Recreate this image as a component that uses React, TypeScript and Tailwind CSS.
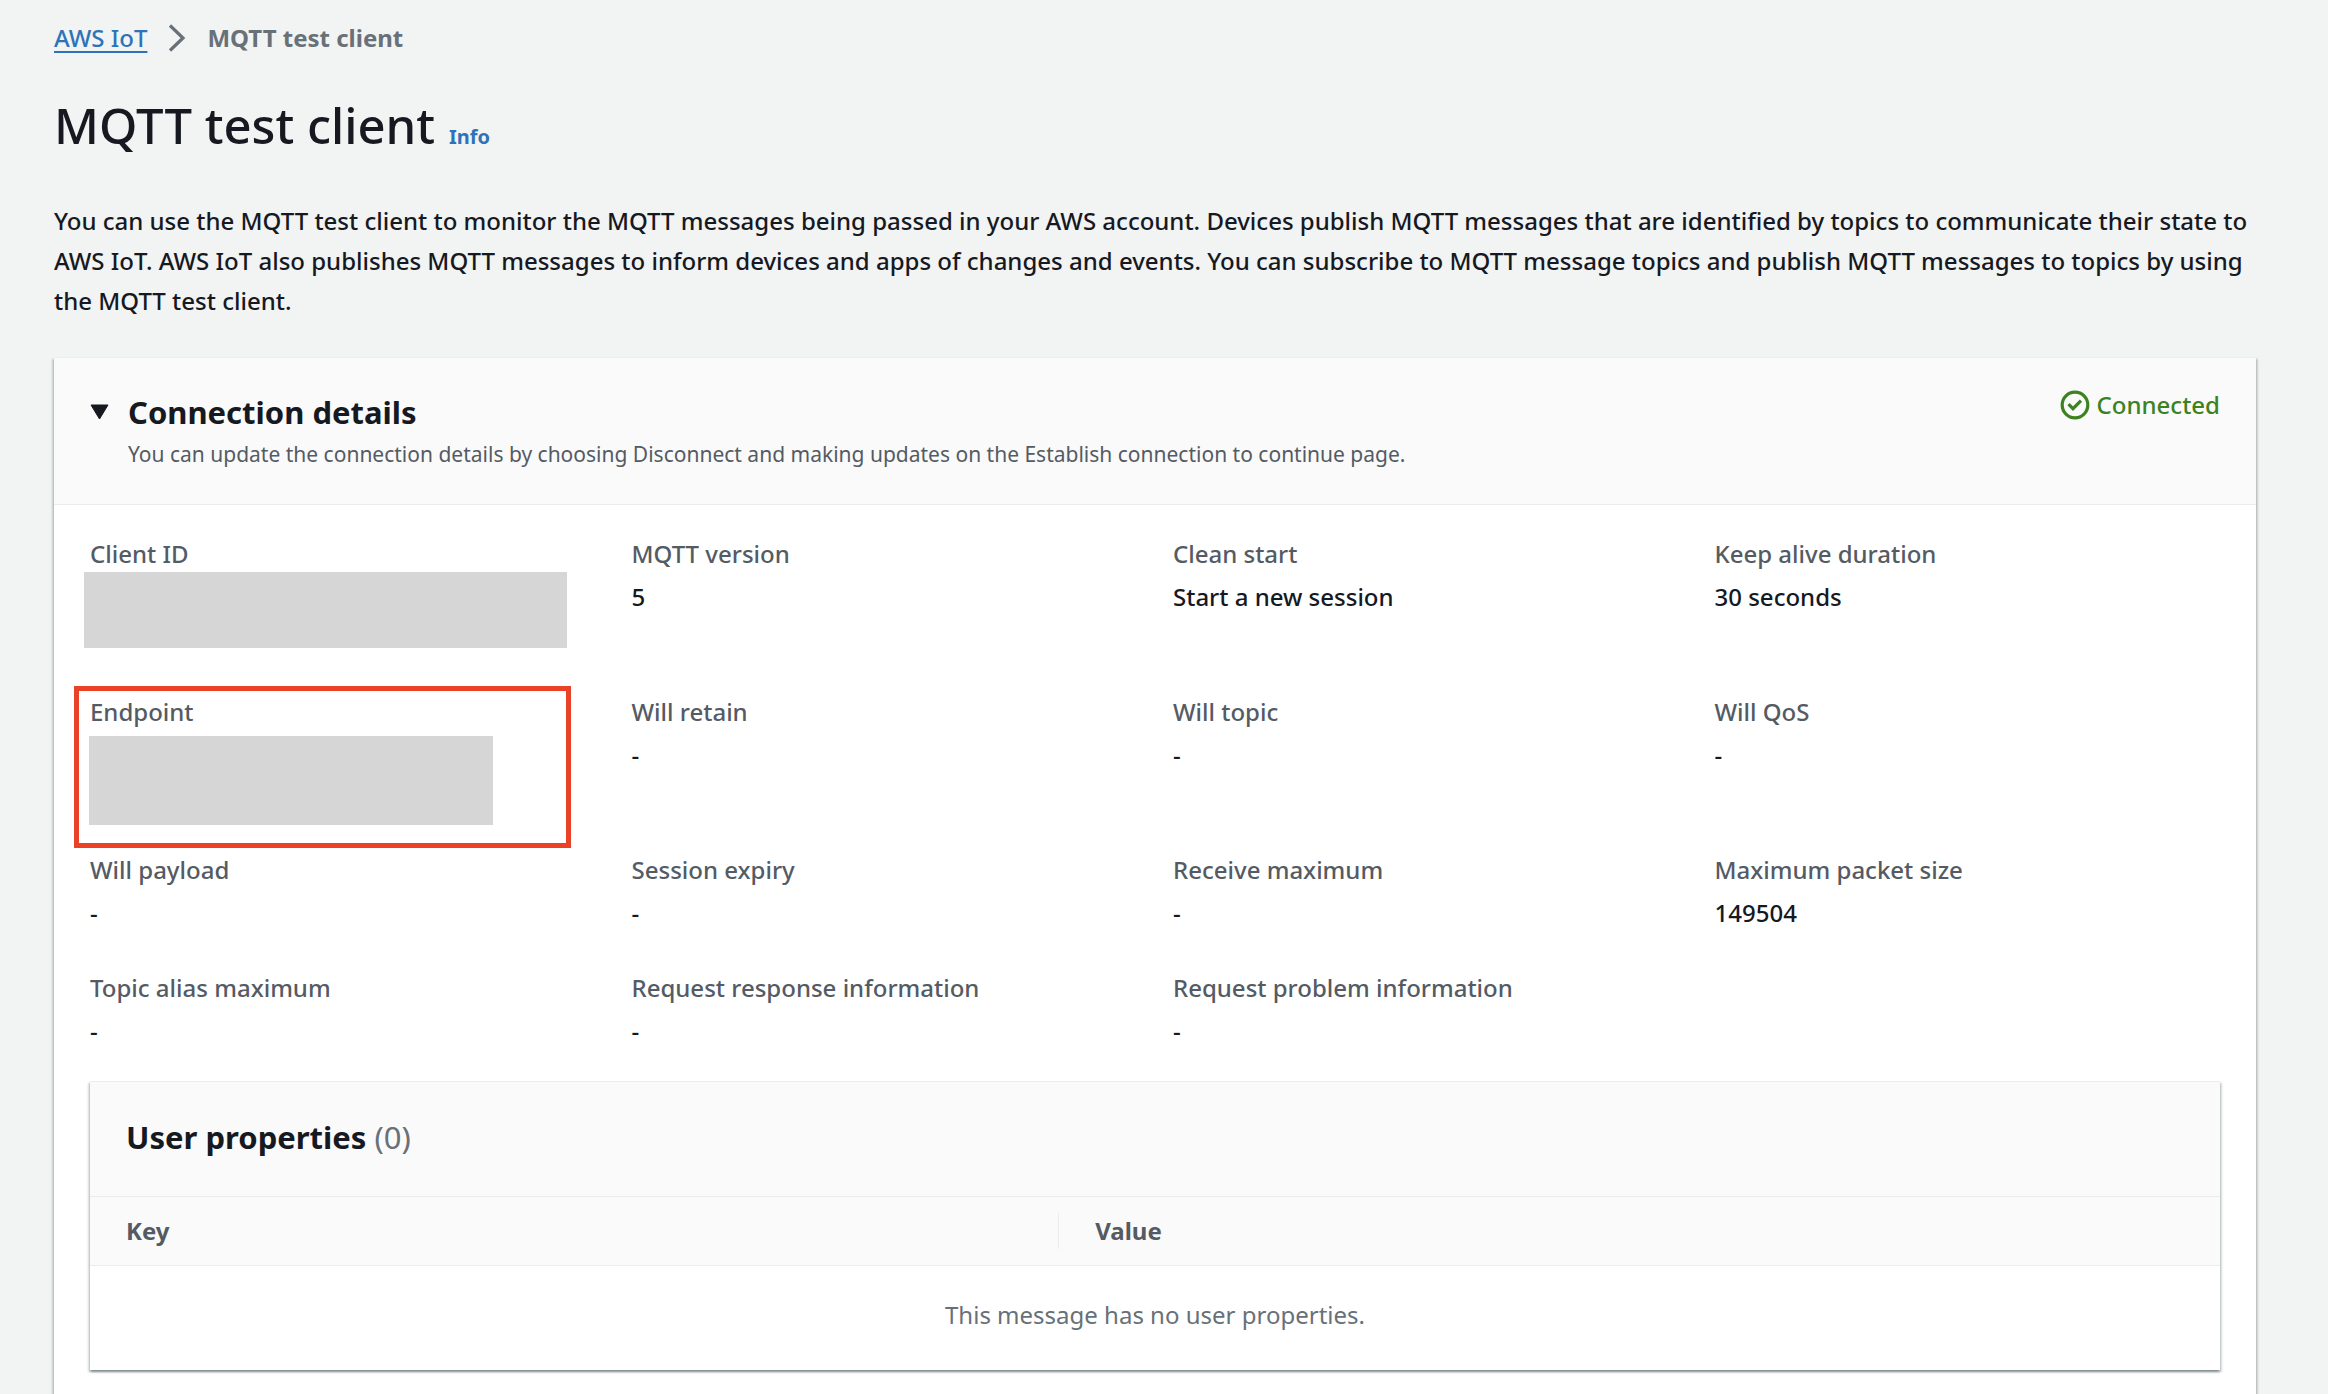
import React from "react";

type Detail = { label: string; value?: string; mask?: "client" | "endpoint" };

const details: Detail[] = [
  { label: "Client ID", mask: "client" },
  { label: "MQTT version", value: "5" },
  { label: "Clean start", value: "Start a new session" },
  { label: "Keep alive duration", value: "30 seconds" },
  { label: "Endpoint", mask: "endpoint" },
  { label: "Will retain", value: "-" },
  { label: "Will topic", value: "-" },
  { label: "Will QoS", value: "-" },
  { label: "Will payload", value: "-" },
  { label: "Session expiry", value: "-" },
  { label: "Receive maximum", value: "-" },
  { label: "Maximum packet size", value: "149504" },
  { label: "Topic alias maximum", value: "-" },
  { label: "Request response information", value: "-" },
  { label: "Request problem information", value: "-" },
];

const surface =
  "border-t border-[#eaeded] bg-white shadow-[0_2px_2px_0_rgba(0,28,36,0.3),2px_2px_2px_0_rgba(0,28,36,0.15),-2px_2px_2px_0_rgba(0,28,36,0.15)]";

function Breadcrumbs() {
  return (
    <nav aria-label="Breadcrumbs" className="flex items-center">
      <a href="#iot" className="text-[#2e73b8] underline decoration-2 underline-offset-4">
        AWS IoT
      </a>
      <svg viewBox="0 0 18 28" className="mx-[21px] h-7 w-[18px]" fill="none" stroke="#687078" strokeWidth="3.2" aria-hidden="true">
        <path d="M2 1.5 L15 14 L2 26.5" />
      </svg>
      <span className="font-bold text-[#687078]">MQTT test client</span>
    </nav>
  );
}

function DetailItem({ label, value, mask }: Detail) {
  return (
    <div className="relative">
      {mask === "endpoint" && (
        <div className="absolute -top-1.5 -left-4 h-[162px] w-[497px] border-[5px] border-[#e94227]" />
      )}
      <dt className="mb-[3px] text-[#545b64]">{label}</dt>
      {mask ? (
        <dd className="h-20">
          <div
            className={
              mask === "client"
                ? "absolute top-[38px] -left-1.5 h-[76px] w-[483px] bg-[#d6d6d6]"
                : "absolute top-11 -left-px h-[89px] w-[404px] bg-[#d6d6d6]"
            }
          />
        </dd>
      ) : (
        <dd>{value}</dd>
      )}
    </div>
  );
}

function UserProperties() {
  return (
    <section className={surface}>
      <h3 className="border-b border-[#eaeded] bg-[#fafafa] px-9 pt-[34px] pb-[38px] text-[31px] leading-[42px] font-bold">
        User properties <span className="font-normal text-[#687078]">(0)</span>
      </h3>
      <table className="w-full table-fixed">
        <thead className="border-b border-[#eaeded] bg-[#fafafa] text-left text-[#545b64]">
          <tr>
            <th className="w-[45.5%] py-4">
              <div className="border-r border-[#eaeded] px-9 leading-9">Key</div>
            </th>
            <th className="px-9 py-4 leading-9">Value</th>
          </tr>
        </thead>
        <tbody>
          <tr>
            <td colSpan={2} className="px-9 pt-[29px] pb-[35px] text-center font-normal text-[#687078]">
              This message has no user properties.
            </td>
          </tr>
        </tbody>
      </table>
    </section>
  );
}

export default function App() {
  return (
    <main className="flex min-h-screen flex-col bg-[#f2f3f3] pr-[72px] pl-[54px] font-['Noto_Sans',sans-serif] text-[24px] leading-10 font-medium text-[#16191f]">
      <div className="pt-[18px]">
        <Breadcrumbs />
      </div>
      <div className="mt-[31px] flex items-baseline gap-3.5">
        <h1 className="text-[49px] leading-[72px]">MQTT test client</h1>
        <a href="#info" className="text-[20px] font-bold text-[#2e73b8]">
          Info
        </a>
      </div>
      <p className="mt-10">
        You can use the MQTT test client to monitor the MQTT messages being passed in your AWS account. Devices publish
        MQTT messages that are identified by topics to communicate their state to AWS IoT. AWS IoT also publishes MQTT
        messages to inform devices and apps of changes and events. You can subscribe to MQTT message topics and publish
        MQTT messages to topics by using the MQTT test client.
      </p>
      <section className={`mt-9 grow ${surface}`}>
        <header className="flex items-start justify-between border-b border-[#eaeded] bg-[#fafafa] px-9 pt-7 pb-[34px]">
          <div className="flex">
            <button type="button" aria-label="Collapse connection details" aria-expanded="true" className="mt-3.5 h-6 w-[38px]">
              <svg viewBox="0 0 20 16" className="h-4 w-5" fill="#16191f" aria-hidden="true">
                <path d="M1 1 H18 L9.5 15 Z" stroke="#16191f" strokeWidth="1" strokeLinejoin="round" />
              </svg>
            </button>
            <div>
              <h2 className="text-[31px] leading-[52px] font-bold">Connection details</h2>
              <p className="text-[21px] leading-8 font-normal text-[#545b64]">
                You can update the connection details by choosing Disconnect and making updates on the Establish
                connection to continue page.
              </p>
            </div>
          </div>
          <div className="flex items-center gap-[7px] leading-[38px] text-[#3d8220]">
            <svg viewBox="0 0 30 30" className="size-[30px]" fill="none" stroke="currentColor" strokeWidth="3.2" aria-hidden="true">
              <circle cx="15" cy="15" r="12.8" />
              <path d="M8.5 14.2 L13 18.7 L21 10.7" />
            </svg>
            Connected
          </div>
        </header>
        <div className="px-9 pt-[29px] pb-7">
          <dl className="grid grid-cols-4 gap-x-9 gap-y-[35px]">
            {details.map((d) => (
              <DetailItem key={d.label} {...d} />
            ))}
          </dl>
          <div className="mt-[30px]">
            <UserProperties />
          </div>
        </div>
      </section>
    </main>
  );
}
